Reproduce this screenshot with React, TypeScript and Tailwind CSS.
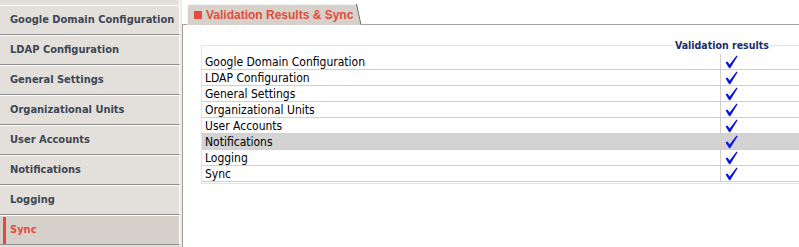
import React from "react";

const items = [
  "Google Domain Configuration",
  "LDAP Configuration",
  "General Settings",
  "Organizational Units",
  "User Accounts",
  "Notifications",
  "Logging",
  "Sync",
];

function Check() {
  return (
    <svg width="13" height="14" viewBox="0 0 13 14">
      <path d="M0.5 7.5 L2.6 6.4 L4.6 9.6 L11.6 0.6 L12.6 1.3 L5.2 13.2 L4.2 13.2 Z" fill="#0a14e6" />
    </svg>
  );
}

export default function App() {
  return (
    <div
      className="w-[799px] h-[247px] overflow-hidden bg-white flex"
      style={{ fontFamily: '"DejaVu Sans Condensed", "DejaVu Sans", sans-serif' }}
    >
      <div className="w-[180px] shrink-0 flex flex-col bg-[#e3e0db]">
        <div className="h-[5px] shrink-0 border-r border-white" />
        {items.map((it) => {
          const sel = it === "Sync";
          return (
            <div
              key={it}
              className={
                "h-[30px] shrink-0 flex items-center whitespace-nowrap border-t border-b border-r border-t-white border-r-white border-b-[#8e8e8e] text-[11px] font-bold " +
                (sel ? "bg-[#d5d1ca] text-[#e24b3d]" : "text-[#3d4654] pl-[10px]")
              }
            >
              {sel && <div className="ml-[3px] mr-[4px] w-[3px] h-[27px] bg-[#e24b3d]" />}
              <span>{it}</span>
            </div>
          );
        })}
      </div>
      <div className="flex-1 flex flex-col pl-[2px] bg-[#eceae6]">
        <div className="flex-1 flex flex-col bg-white">
          <div className="h-[25px] shrink-0 flex items-end">
            <div className="w-[5px] self-stretch border-b border-[#a0a0a0]" />
            <div className="flex items-stretch h-[21px]">
              <div className="flex items-center bg-[#d6d2cb] border-t border-l border-[#f4f3f1] rounded-tl-[3px] pl-[6px] pr-[3px]">
                <div className="w-[8px] h-[8px] bg-[#e24b3d] mr-[4px]" />
                <span
                  className="text-[12px] font-bold text-[#e24b3d] leading-none whitespace-nowrap"
                  style={{ fontFamily: '"Liberation Sans", Arial, sans-serif' }}
                >
                  Validation Results &amp; Sync
                </span>
              </div>
              <svg width="6" height="21" viewBox="0 0 6 21" className="block">
                <polygon points="0,0 1,0 5,21 0,21" fill="#d6d2cb" />
                <line x1="0.5" y1="0" x2="5" y2="21" stroke="#6d6d6d" strokeWidth="1" />
              </svg>
            </div>
            <div className="flex-1 self-stretch border-b border-[#a0a0a0]" />
          </div>
          <div className="flex-1 border-l border-[#a0a0a0] pl-[18px] pt-[13px]">
            <fieldset className="w-[640px] border border-[#e4e4e4] p-0 pb-[1px] m-0">
              <legend className="ml-[472px] px-[1px] text-[10.5px] font-bold text-[#1b2d6b] leading-[14px] whitespace-nowrap">
                Validation results
              </legend>
              <div className="h-[2px]" />
              {items.map((it) => (
                <div
                  key={it}
                  className={
                    "flex h-[16px] border-b border-[#d4d0c8] text-[12px] text-black whitespace-nowrap " +
                    (it === "Notifications" ? "bg-[#d3d3d3]" : "")
                  }
                >
                  <div className="w-[519px] shrink-0 border-r border-[#d4d0c8] pl-[3px] leading-[16px]">{it}</div>
                  <div className="flex-1 pl-[4px] flex items-center">
                    <Check />
                  </div>
                </div>
              ))}
            </fieldset>
          </div>
        </div>
      </div>
    </div>
  );
}
